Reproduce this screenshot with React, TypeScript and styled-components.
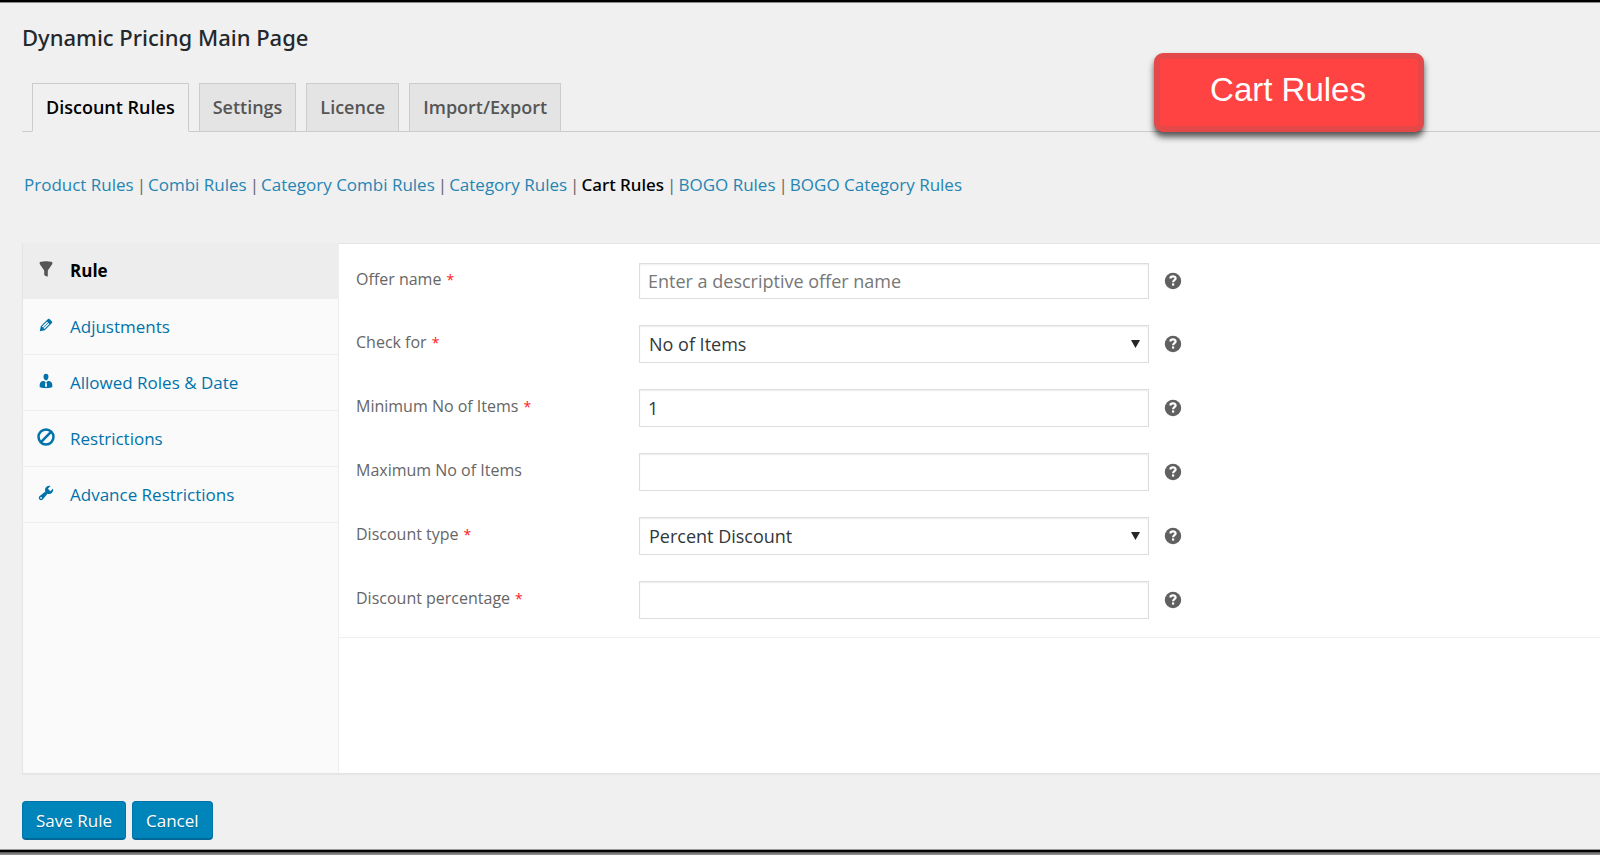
import React, { useState } from "react";
import styled, { createGlobalStyle, css } from "styled-components";

const GlobalStyle = createGlobalStyle`
  * { box-sizing: border-box; }
  body {
    margin: 0;
    background: #f0f0f0;
    color: #444;
    font-family: "Open Sans", "Noto Sans", sans-serif;
    font-size: 17px;
    line-height: 24px;
  }
`;

const Page = styled.div`
  border-top: 2px solid #000;
  box-shadow: inset 0 1px 0 #8a8a8a;
`;

const Main = styled.main`
  padding: 19px 0 9px 22px;
`;

const Header = styled.header`
  position: relative;
`;

const Title = styled.h1`
  margin: 0;
  color: #23282d;
  font-family: "Noto Sans", sans-serif;
  font-size: 22px;
  font-weight: 500;
  line-height: 32px;
`;

const Callout = styled.div`
  position: absolute;
  top: 32px;
  right: 176px;
  width: 270px;
  height: 79px;
  padding-right: 2px;
  border: 6px solid #e54848;
  border-radius: 9px;
  background: #ff4242;
  box-shadow: 0 5px 6px rgba(0, 0, 0, 0.65);
  color: #fff;
  font-family: "Liberation Sans", Arial, sans-serif;
  font-size: 33px;
  line-height: 62px;
  text-align: center;
`;

const Tabs = styled.nav`
  display: flex;
  gap: 10px;
  margin-top: 30px;
  padding-left: 10px;
  border-bottom: 1px solid #ccc;
`;

const Tab = styled.a<{ $active?: boolean }>`
  margin-bottom: -1px;
  padding: 11px 13px 12px;
  border: 1px solid #ccc;
  border-bottom-color: ${(p) => (p.$active ? "#f0f0f0" : "#ccc")};
  background: ${(p) => (p.$active ? "#f0f0f0" : "#e4e4e4")};
  color: ${(p) => (p.$active ? "#000" : "#555")};
  font-size: 18px;
  font-weight: 600;
  line-height: 24px;
  text-decoration: none;
`;

const SubNav = styled.nav`
  display: flex;
  margin-top: 41px;
  padding-left: 2px;
  color: #666;
`;

const SubItem = styled.span`
  &:not(:last-child)::after {
    content: "|";
    margin: 0 2px 0 3px;
  }
`;

const SubLink = styled.a<{ $active?: boolean }>`
  color: ${(p) => (p.$active ? "#000" : "#2585b2")};
  text-decoration: none;
  ${(p) => p.$active && css`
    font-family: "Noto Sans", sans-serif;
    font-weight: 500;
  `}
`;

const Panel = styled.section`
  display: flex;
  min-height: 531px;
  margin-top: 46px;
  border: 1px solid #e5e5e5;
  border-right: 0;
  background: #fff;
  box-shadow: 0 1px 1px rgba(0, 0, 0, 0.04);
`;

const Side = styled.nav`
  flex: none;
  width: 316px;
  margin-top: -1px;
  border-right: 1px solid #eee;
  background: #fafafa;
`;

const SideLink = styled.a<{ $active?: boolean }>`
  display: flex;
  align-items: center;
  gap: 15px;
  height: 56px;
  padding-left: 14px;
  border-bottom: 1px solid #eee;
  background: ${(p) => (p.$active ? "#ededed" : "transparent")};
  color: ${(p) => (p.$active ? "#000" : "#0073aa")};
  font-size: 17px;
  font-weight: ${(p) => (p.$active ? 700 : 400)};
  text-decoration: none;

  svg {
    flex: none;
    margin-bottom: 4px;
    fill: ${(p) => (p.$active ? "#555" : "#0073aa")};
  }
`;

const Form = styled.form`
  flex: 1;
`;

const Fields = styled.div`
  display: flex;
  flex-direction: column;
  gap: 26px;
  padding: 19px 17px 18px;
  border-bottom: 1px solid #eee;
`;

const Row = styled.div`
  display: grid;
  grid-template-columns: 283px 510px 18px;
  align-items: center;
`;

const Label = styled.label`
  padding-bottom: 4px;
  color: #666;
  font-size: 16px;
`;

const Required = styled.span`
  margin-left: 5px;
  color: #ff2020;
  font-size: 14px;
`;

const control = css`
  width: 100%;
  border: 1px solid #ddd;
  border-radius: 0;
  background: #fff;
  box-shadow: inset 0 1px 2px rgba(0, 0, 0, 0.07);
  color: #32373c;
  font-family: inherit;
  font-size: 18px;
`;

const Input = styled.input<{ $compact?: boolean }>`
  ${control}
  height: ${(p) => (p.$compact ? 36 : 38)}px;
  padding: 0 8px;
  &::placeholder { color: #777; opacity: 1; }
`;

const SelectBox = styled.div`
  position: relative;
  svg {
    position: absolute;
    top: 15px;
    right: 9px;
    fill: #23282d;
    pointer-events: none;
  }
`;

const Select = styled.select`
  ${control}
  display: block;
  height: 38px;
  padding: 0 9px;
  appearance: none;
`;

const Help = styled.button`
  display: flex;
  width: 18px;
  margin-left: 15px;
  padding: 0;
  border: 0;
  background: none;

  svg {
    flex: none;
  }
`;

const Actions = styled.div`
  display: flex;
  gap: 6px;
  margin-top: 27px;
`;

const Button = styled.button`
  height: 39px;
  padding: 0 13px;
  border: 1px solid #0073aa;
  border-bottom: 2px solid #006799;
  border-radius: 4px;
  background: #0085ba;
  color: #fff;
  font-family: inherit;
  font-size: 17px;
  text-shadow: 0 1px 1px #006799;
`;

const Footer = styled.footer`
  height: 6px;
  background: linear-gradient(#999 1px, #000 1px, #000 3px, #555 3px, #999 6px);
`;

const tabs = ["Discount Rules", "Settings", "Licence", "Import/Export"];

const ruleTypes = [
  "Product Rules",
  "Combi Rules",
  "Category Combi Rules",
  "Category Rules",
  "Cart Rules",
  "BOGO Rules",
  "BOGO Category Rules",
];

const Icon = ({ children }: { children: React.ReactNode }) => (
  <svg width="18" height="18" viewBox="0 0 20 20" aria-hidden="true">
    {children}
  </svg>
);

const sections = [
  {
    name: "Rule",
    icon: <path d="M3 4.5v-2s3.34-1 7-1 7 1 7 1v2l-5 7.03v6.97s-1.22-.09-2.25-.59S8 16.5 8 16.5v-4.97z" />,
  },
  {
    name: "Adjustments",
    icon: (
      <path d="M13.89 3.39l2.71 2.72c.46.46.42 1.24.03 1.64l-8.01 8.02-5.56 1.16 1.16-5.58s7.6-7.63 7.99-8.03c.39-.39 1.22-.39 1.68.07zm-2.73 2.79l-5.59 5.61 1.11 1.11 5.54-5.65zm-2.97 8.23l5.58-5.6-1.07-1.08-5.59 5.6z" />
    ),
  },
  {
    name: "Allowed Roles & Date",
    icon: (
      <path d="M7.3 6l-.03-.19c-.04-.37-.05-.73-.03-1.08.02-.36.1-.71.25-1.04.14-.32.31-.61.52-.86s.49-.46.83-.6c.34-.15.72-.23 1.13-.23.69 0 1.26.2 1.71.59s.76.87.91 1.44.18 1.16.09 1.78l-.03.19c-.01.09-.05.25-.11.48-.05.24-.12.47-.2.69-.08.21-.19.45-.34.72-.14.27-.3.49-.47.69-.18.19-.4.34-.67.48-.27.13-.55.19-.86.19s-.59-.06-.87-.19c-.26-.13-.49-.29-.67-.5-.18-.2-.34-.42-.49-.66-.15-.25-.26-.49-.34-.73-.09-.25-.16-.47-.21-.67-.06-.21-.1-.37-.12-.5zm9.2 6.24c.41.7.5 1.41.5 2.14v2.49c0 .03-.12.08-.29.13-.18.04-.42.13-.97.27-.55.12-1.1.24-1.65.34s-1.19.19-1.95.27c-.75.08-1.46.12-2.13.12-.68 0-1.39-.04-2.14-.12-.75-.07-1.4-.17-1.98-.27-.58-.11-1.08-.23-1.56-.34-.49-.11-.8-.21-1.06-.29L3 16.87v-2.49c0-.75.07-1.46.46-2.15s.81-1.25 1.5-1.68C5.66 10.12 7.19 10 8 10l1.67 1.67L9 13v3l1.02 1.08L11 16v-3l-.68-1.33L11.97 10c.77 0 2.2.07 2.9.52.71.45 1.21 1.02 1.63 1.72z" />
    ),
  },
  {
    name: "Restrictions",
    icon: (
      <g fill="none" stroke="#0073aa" strokeWidth="2.8">
        <circle cx="10" cy="10" r="8.3" />
        <path d="M4.4 15.6L15.6 4.4" />
      </g>
    ),
  },
  {
    name: "Advance Restrictions",
    icon: (
      <path d="M16.68 9.77c-1.34 1.34-3.3 1.67-4.95.99l-5.41 6.52c-.99.99-2.59.99-3.58 0s-.99-2.59 0-3.57l6.52-5.42c-.68-1.65-.35-3.61.99-4.95 1.28-1.28 3.12-1.62 4.72-1.06l-2.89 2.89 2.82 2.82 2.86-2.87c.53 1.58.18 3.39-1.08 4.65zM3.81 16.21c.4.39 1.04.39 1.43 0 .4-.4.4-1.04 0-1.43-.39-.4-1.03-.4-1.43 0-.39.39-.39 1.03 0 1.43z" />
    ),
  },
];

interface FieldProps {
  id: string;
  label: string;
  required?: boolean;
  children: React.ReactNode;
}

const Field = ({ id, label, required, children }: FieldProps) => (
  <Row>
    <Label htmlFor={id}>
      {label}
      {required && <Required>*</Required>}
    </Label>
    {children}
    <Help type="button" aria-label={`Help: ${label}`}>
      <svg width="18" height="18" viewBox="0 0 18 18" aria-hidden="true">
        <circle cx="9" cy="9" r="8.2" fill="#606060" />
        <path d="M6.4 6.6c0-2.9 5.2-2.9 5.2-.1 0 1.8-2.5 1.7-2.5 3.8" fill="none" stroke="#fff" strokeWidth="2.2" />
        <rect x="8" y="11.4" width="2.2" height="2.2" fill="#fff" />
      </svg>
    </Help>
  </Row>
);

const SelectField = ({ id, options }: { id: string; options: string[] }) => (
  <SelectBox>
    <Select id={id}>
      {options.map((o) => (
        <option key={o}>{o}</option>
      ))}
    </Select>
    <svg width="9" height="8" viewBox="0 0 9 8" aria-hidden="true">
      <path d="M0 0h9L4.5 8z" />
    </svg>
  </SelectBox>
);

export default function App() {
  const [minimum, setMinimum] = useState("1");

  return (
    <>
      <GlobalStyle />
      <Page>
        <Main>
          <Header>
            <Title>Dynamic Pricing Main Page</Title>
            <Tabs>
              {tabs.map((t, i) => (
                <Tab key={t} href="#" $active={i === 0}>{t}</Tab>
              ))}
            </Tabs>
            <Callout>Cart Rules</Callout>
          </Header>
          <SubNav>
            {ruleTypes.map((r) => (
              <SubItem key={r}>
                <SubLink href="#" $active={r === "Cart Rules"}>{r}</SubLink>
              </SubItem>
            ))}
          </SubNav>
          <Panel>
            <Side>
              {sections.map((s, i) => (
                <SideLink key={s.name} href="#" $active={i === 0}>
                  <Icon>{s.icon}</Icon>
                  {s.name}
                </SideLink>
              ))}
            </Side>
            <Form id="rule-form" onSubmit={(e) => e.preventDefault()}>
              <Fields>
                <Field id="offer-name" label="Offer name" required>
                  <Input id="offer-name" $compact placeholder="Enter a descriptive offer name" />
                </Field>
                <Field id="check-for" label="Check for" required>
                  <SelectField id="check-for" options={["No of Items"]} />
                </Field>
                <Field id="minimum" label="Minimum No of Items" required>
                  <Input id="minimum" value={minimum} onChange={(e) => setMinimum(e.target.value)} />
                </Field>
                <Field id="maximum" label="Maximum No of Items">
                  <Input id="maximum" />
                </Field>
                <Field id="discount-type" label="Discount type" required>
                  <SelectField id="discount-type" options={["Percent Discount"]} />
                </Field>
                <Field id="percentage" label="Discount percentage" required>
                  <Input id="percentage" />
                </Field>
              </Fields>
            </Form>
          </Panel>
          <Actions>
            <Button type="submit" form="rule-form">Save Rule</Button>
            <Button type="button">Cancel</Button>
          </Actions>
        </Main>
        <Footer />
      </Page>
    </>
  );
}
